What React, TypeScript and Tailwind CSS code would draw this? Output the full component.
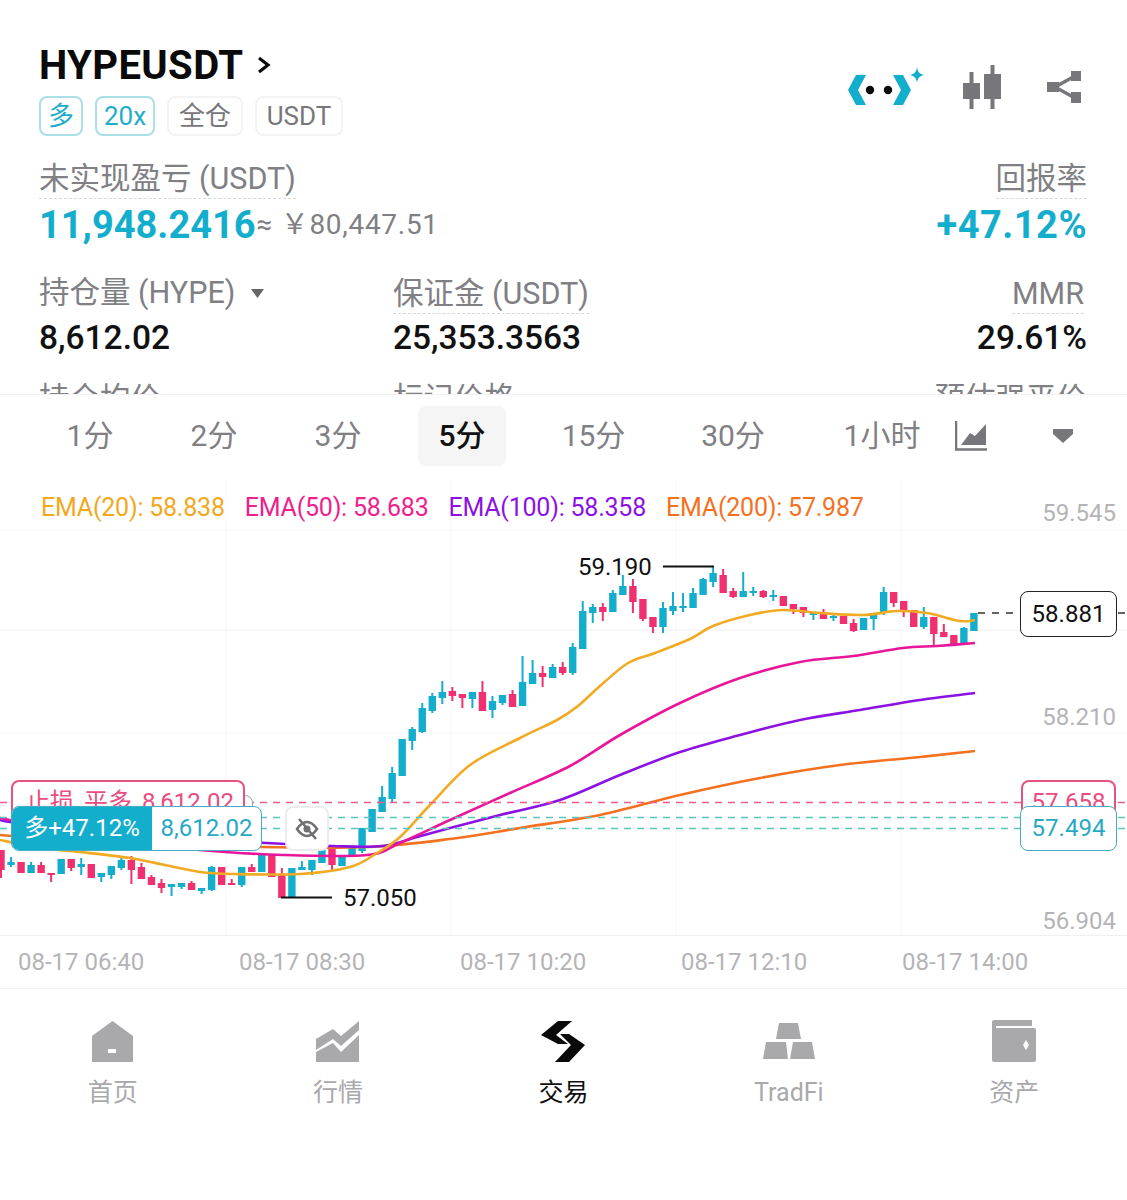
import React from 'react';

const FONT = "font-['Roboto','Noto_Sans_CJK_SC',sans-serif]";
const TEAL = '#14aecd';
const PINK = '#f0306f';

// [colour, body top, body bottom, wick top, wick bottom], one per 5 min bar
type Bar = [string, number, number, number, number];
const bars: Bar[] = [
  ['p', 850, 870, 850, 878], ['t', 862, 865, 857, 867], ['p', 862, 873, 862, 873], ['t', 865, 873, 862, 873],
  ['p', 865, 873, 862, 873], ['p', 873, 875, 873, 882], ['t', 859, 874, 859, 874], ['p', 859, 868, 859, 871],
  ['t', 864, 867, 858, 875], ['p', 864, 878, 864, 878], ['t', 873, 877, 873, 882], ['t', 866, 875, 866, 879],
  ['t', 860, 868, 858, 870], ['p', 860, 870, 856, 884], ['p', 867, 879, 863, 879], ['p', 877, 885, 875, 885],
  ['p', 883, 888, 879, 893], ['t', 884, 887, 884, 896], ['t', 883, 887, 883, 889], ['p', 883, 890, 881, 890],
  ['t', 888, 891, 888, 894], ['t', 867, 890, 866, 891], ['p', 867, 885, 867, 885], ['p', 883, 885, 879, 885],
  ['t', 867, 885, 867, 887], ['p', 867, 872, 864, 872], ['t', 855, 872, 855, 872], ['p', 855, 877, 855, 877],
  ['p', 875, 898, 868, 898], ['t', 868, 897, 868, 897], ['t', 867, 870, 861, 870], ['t', 860, 870, 860, 875],
  ['t', 850, 863, 850, 863], ['p', 848, 865, 848, 870], ['t', 857, 866, 857, 866], ['t', 847, 857, 847, 857],
  ['t', 828, 851, 828, 853], ['t', 809, 832, 809, 832], ['t', 797, 812, 786, 812], ['t', 773, 799, 767, 802],
  ['t', 739, 776, 739, 776], ['t', 729, 741, 727, 750], ['t', 708, 732, 703, 733], ['t', 696, 711, 693, 713],
  ['t', 692, 698, 681, 704], ['p', 691, 696, 687, 701], ['p', 694, 698, 694, 708], ['t', 692, 699, 692, 708],
  ['p', 692, 711, 681, 711], ['t', 701, 710, 696, 718], ['t', 695, 703, 695, 705], ['p', 694, 707, 690, 707],
  ['t', 682, 706, 656, 706], ['t', 673, 684, 660, 684], ['p', 673, 677, 666, 687], ['t', 667, 678, 664, 678],
  ['p', 667, 673, 662, 675], ['t', 647, 673, 643, 675], ['t', 611, 649, 601, 649], ['t', 607, 613, 604, 623],
  ['p', 607, 612, 603, 621], ['t', 593, 612, 590, 612], ['t', 586, 595, 575, 595], ['p', 586, 602, 579, 613],
  ['p', 599, 619, 599, 621], ['p', 617, 627, 617, 633], ['t', 608, 627, 602, 633], ['t', 606, 611, 592, 615],
  ['t', 606, 608, 593, 612], ['t', 593, 608, 588, 608], ['t', 579, 595, 578, 595], ['t', 573, 582, 567, 587],
  ['p', 575, 593, 569, 593], ['p', 591, 597, 588, 598], ['t', 591, 597, 572, 597], ['t', 591, 593, 587, 596],
  ['p', 591, 597, 590, 598], ['t', 595, 597, 590, 601], ['p', 596, 606, 596, 606], ['p', 604, 609, 604, 614],
  ['p', 607, 613, 607, 617], ['t', 613, 614, 613, 620], ['p', 612, 619, 609, 619], ['t', 616, 618, 613, 621],
  ['p', 616, 624, 616, 624], ['p', 623, 631, 619, 632], ['t', 618, 630, 618, 630], ['t', 613, 619, 613, 630],
  ['t', 592, 613, 587, 615], ['p', 592, 603, 592, 607], ['p', 601, 612, 601, 617], ['p', 610, 627, 610, 627],
  ['t', 617, 627, 607, 629], ['p', 617, 634, 617, 645], ['p', 632, 637, 624, 637], ['p', 635, 645, 635, 645],
  ['t', 628, 644, 627, 644], ['t', 613, 631, 613, 631],
];

const ema20 = [[0,840],[40,848],[80,852],[130,858],[165,865],[200,872],[233,874],[300,874],[350,867],[377,853],[400,837],[430,805],[470,765],[520,738],[557,720],[578,706],[600,686],[628,663],[655,653],[690,639],[713,626],[750,615],[783,610],[820,613],[863,615],[897,611],[927,613],[960,621],[975,620]];
const ema50 = [[0,818],[60,830],[130,842],[200,850],[283,855],[367,855],[400,843],[450,820],[510,793],[570,766],[620,735],[680,703],[740,678],[800,662],[853,656],[903,648],[937,646],[975,643]];
const ema100 = [[0,818],[10,822],[100,832],[267,843],[333,846],[383,846],[417,837],[450,828],[500,815],[560,800],[620,775],[680,752],[740,735],[800,720],[860,710],[920,700],[975,693]];
const ema200 = [[0,835],[100,842],[260,847],[367,847],[450,839],[520,828],[600,815],[680,795],[760,778],[840,765],[920,757],[975,751]];

// catmull-rom through the sampled points so the averages look smooth
const smooth = (p: number[][]) => {
  let d = `M${p[0][0]} ${p[0][1]}`;
  for (let i = 0; i < p.length - 1; i++) {
    const a = p[Math.max(i - 1, 0)], b = p[i], c = p[i + 1], e = p[Math.min(i + 2, p.length - 1)];
    d += ` C${b[0] + (c[0] - a[0]) / 6} ${b[1] + (c[1] - a[1]) / 6} ${c[0] - (e[0] - b[0]) / 6} ${c[1] - (e[1] - b[1]) / 6} ${c[0]} ${c[1]}`;
  }
  return d;
};

const Logo = () => (
  <svg width="78" height="42" viewBox="0 0 78 42">
    <path d="M8 9H18L10 24L18 39H8L0 24Z" fill={TEAL} />
    <path d="M45 9H55L63 24L55 39H45L53 24Z" fill={TEAL} />
    <circle cx="22" cy="24" r="4.2" fill="#0a0a0a" />
    <circle cx="40" cy="24" r="4.2" fill="#0a0a0a" />
    <path d="M69 1.5C70 6 71 7.5 76 9C71 10.5 70 12 69 16.5C68 12 67 10.5 62 9C67 7.5 68 6 69 1.5Z" fill={TEAL} />
  </svg>
);

const CandleIcon = () => (
  <svg width="42" height="44" viewBox="0 0 42 44" fill="#77777b">
    <rect x="2" y="18" width="17" height="16" />
    <rect x="8.5" y="7" width="4" height="37" />
    <rect x="23" y="9" width="17" height="25" />
    <rect x="29.5" y="0" width="4" height="44" />
  </svg>
);

const ShareIcon = () => (
  <svg width="34" height="32" viewBox="0 0 34 32" fill="#77777b">
    <rect x="0" y="11" width="12" height="10" />
    <rect x="24" y="0" width="10" height="10" />
    <rect x="24" y="21" width="10" height="11" />
    <path d="M8 16L28 5M8 16L28 27" stroke="#77777b" strokeWidth="3.5" fill="none" />
  </svg>
);

const AreaIcon = () => (
  <svg width="32" height="30" viewBox="0 0 32 30" fill="#77777b">
    <path d="M1 0V28.5H32" stroke="#77777b" strokeWidth="2.5" fill="none" />
    <path d="M6 24L15 12L20 15L31 3V24Z" />
  </svg>
);

const HomeIcon = () => (
  <svg width="41" height="41" viewBox="0 0 41 41">
    <path d="M20.5 0L41 15V41H0V15Z" fill="#a9a9ac" />
    <rect x="16" y="28" width="8" height="4" fill="#fff" />
  </svg>
);

const MarketIcon = () => (
  <svg width="44" height="41" viewBox="0 0 44 41" fill="#a9a9ac">
    <path d="M0 18L17 8L25 15L43 0V9L25 25L17 18L0 29Z" />
    <path d="M0 41V31L17 22L25 31L43 14V41Z" />
  </svg>
);

const TradeIcon = () => (
  <svg width="44" height="41" viewBox="0 0 44 41" fill="#0a0a0a">
    <path d="M17 0H31L15 14L27 23H17L0 14Z" />
    <path d="M19 13H28L44 24L28 41H14L30 24Z" />
  </svg>
);

const GoldIcon = () => (
  <svg width="52" height="36" viewBox="0 0 52 36" fill="#a9a9ac">
    <path d="M16 0H35L38 16H13Z" />
    <path d="M3 19H23L25 36H0Z" />
    <path d="M30 19H49L52 36H27Z" />
  </svg>
);

const WalletIcon = () => (
  <svg width="44" height="42" viewBox="0 0 44 42">
    <path d="M0 2Q0 0 2 0H40V6H4V8H42Q44 8 44 10V40Q44 42 42 42H2Q0 42 0 40Z" fill="#a9a9ac" />
    <path d="M34 20L37 25L34 30L31 25Z" fill="#fff" />
  </svg>
);

const Dashed = ({ children, className = '' }: { children: React.ReactNode; className?: string }) => (
  <span className={`inline-block border-b border-dashed border-[#d8d8da] leading-[36px] h-[38px] whitespace-nowrap ${className}`}>{children}</span>
);

const tabs = [
  { label: '1分', cls: 'w-[124px]' },
  { label: '2分', cls: 'w-[124px]' },
  { label: '3分', cls: 'w-[124px]' },
  { label: '5分', cls: 'w-[88px] h-[60px] ml-[18px] mr-[21px] bg-[#f5f5f5] rounded-lg text-[#111] font-medium' },
  { label: '15分', cls: 'w-[133px]' },
  { label: '30分', cls: 'w-[146px]' },
  { label: '1小时', cls: 'w-[152px]' },
];

const navItems = [
  { label: '首页', icon: <HomeIcon />, active: false },
  { label: '行情', icon: <MarketIcon />, active: false },
  { label: '交易', icon: <TradeIcon />, active: true },
  { label: 'TradFi', icon: <GoldIcon />, active: false },
  { label: '资产', icon: <WalletIcon />, active: false },
];

const Chart = () => (
  <div className="relative h-[456px] border-b border-[#f0f0f0] overflow-hidden">
    <svg className="absolute inset-0" width="1127" height="456" viewBox="0 480 1127 456">
      {[530, 630, 733].map(y => (
        <line key={y} x1="0" x2="1127" y1={y} y2={y} stroke={y === 630 ? '#f0f0f0' : '#f8f8f8'} />
      ))}
      {[226, 451, 676, 901].map(x => (
        <line key={x} x1={x} x2={x} y1="480" y2="936" stroke="#f8f8f8" />
      ))}
      {bars.map(([c, top, bottom, hi, lo], k) => {
        const x = 1 + k * 10.03;
        const fill = c === 't' ? TEAL : PINK;
        return (
          <g key={k} fill={fill}>
            <rect x={x - 1} y={hi} width="2" height={lo - hi} />
            <rect x={x - 3.7} y={top} width="7.4" height={Math.max(bottom - top, 2)} />
          </g>
        );
      })}
      <path d={smooth(ema200)} fill="none" stroke="#f4711f" strokeWidth="2.6" />
      <path d={smooth(ema100)} fill="none" stroke="#8c12e4" strokeWidth="2.6" />
      <path d={smooth(ema50)} fill="none" stroke="#e8169a" strokeWidth="2.6" />
      <path d={smooth(ema20)} fill="none" stroke="#f2aa22" strokeWidth="2.6" />
      <line x1="0" x2="1127" y1="802.5" y2="802.5" stroke="#ea5c8c" strokeWidth="1.5" strokeDasharray="7 6" />
      <line x1="0" x2="1127" y1="817.5" y2="817.5" stroke="#5cc4bd" strokeWidth="1.5" strokeDasharray="7 6" />
      <line x1="0" x2="1127" y1="828.5" y2="828.5" stroke="#5cc4bd" strokeWidth="1.5" strokeDasharray="7 6" />
      <line x1="978" x2="1127" y1="613" y2="613" stroke="#333" strokeWidth="1.5" strokeDasharray="7 7" />
      <line x1="663" x2="714" y1="566.5" y2="566.5" stroke="#111" strokeWidth="2" />
      <line x1="281" x2="332" y1="897.5" y2="897.5" stroke="#111" strokeWidth="2" />
    </svg>

    {/* EMA legend */}
    <div className="absolute left-[41px] top-[13px] flex gap-[20px] text-[25px] leading-[30px] tracking-[-0.22px] whitespace-nowrap">
      <span className="text-[#f2a81d]">EMA(20): 58.838</span>
      <span className="text-[#ee1f8e]">EMA(50): 58.683</span>
      <span className="text-[#8c12e4]">EMA(100): 58.358</span>
      <span className="text-[#f4711f]">EMA(200): 57.987</span>
    </div>

    {/* price axis */}
    <span className="absolute right-[11px] top-[18px] text-[24px] leading-[30px] text-[#b4b4b7]">59.545</span>
    <span className="absolute right-[11px] top-[222px] text-[24px] leading-[30px] text-[#b4b4b7]">58.210</span>
    <span className="absolute right-[11px] top-[426px] text-[24px] leading-[30px] text-[#b4b4b7]">56.904</span>

    {/* high / low marks */}
    <span className="absolute left-[578px] top-[72px] text-[24px] leading-[30px] text-[#111]">59.190</span>
    <span className="absolute left-[343px] top-[403px] text-[24px] leading-[30px] text-[#111]">57.050</span>

    {/* last price */}
    <div className="absolute left-[1020px] top-[111px] w-[97px] h-[46px] flex items-center justify-center pb-[1px] bg-white border-[1.5px] border-[#222] rounded-lg text-[24px] text-[#111]">58.881</div>

    {/* stop loss tag + position tag */}
    <div className="absolute left-[213px] top-[315px] w-[40px] h-[40px] rounded-lg border border-[#9aa5a8] bg-white" />
    <div className="absolute left-[11px] top-[300px] w-[234px] h-[46px] bg-white border-2 border-[#e8527f] rounded-lg flex pl-[13px] pt-[5px] gap-[10px] text-[24px] leading-[30px] text-[#ea4c7f] whitespace-nowrap">
      <span>止损</span><span>平多</span><span>8,612.02</span>
    </div>
    <div className="absolute left-[11px] top-[326px] w-[251px] h-[45px] flex rounded-lg overflow-hidden border-[1.5px] border-[#46aec4] bg-white text-[24px] whitespace-nowrap">
      <div className="w-[140px] flex items-center justify-center pb-[1px] text-white" style={{ backgroundColor: TEAL }}>多+47.12%</div>
      <div className="flex-1 flex items-center justify-center pb-[1px] text-[#27a9c6]">8,612.02</div>
    </div>
    <div className="absolute left-[285px] top-[326px] w-[44px] h-[45px] flex items-center justify-center bg-white border-2 border-[#ececec] rounded-lg">
      <svg width="24" height="22" viewBox="0 0 24 22" fill="none" stroke="#6f6f73" strokeWidth="2.5">
        <path d="M2 11C6 5 9 4 12 4C15 4 18 5 22 11C18 17 15 18 12 18C9 18 6 17 2 11Z" />
        <circle cx="12" cy="11" r="3.5" fill="#6f6f73" stroke="none" />
        <path d="M4 1L21 21" />
      </svg>
    </div>

    <div className="absolute left-[1021px] top-[300px] w-[95px] h-[46px] bg-white border-2 border-[#e8527f] rounded-lg flex justify-center pt-[5px] text-[24px] leading-[30px] text-[#ea4c7f]">57.658</div>
    <div className="absolute left-[1020px] top-[326px] w-[97px] h-[45px] flex items-center justify-center pb-[1px] bg-white border-[1.5px] border-[#46aec4] rounded-lg text-[24px] text-[#27a9c6]">57.494</div>
  </div>
);

export default function App() {
  return (
    <div className={`w-[1127px] h-[1200px] bg-white flex flex-col overflow-hidden ${FONT}`}>
      {/* Position summary */}
      <div className="h-[395px] shrink-0 overflow-hidden border-b border-[#f2f2f2] pt-[42px] pl-[39px] pr-[40px]">
        <div className="flex items-center justify-between pr-[6px]">
          <div>
            <div className="flex items-center gap-[14px] h-[48px]">
              <span className="text-[40px] leading-[48px] font-bold tracking-[0.4px] text-[#0a0a0a]">HYPEUSDT</span>
              <svg width="14" height="18" viewBox="0 0 14 18" fill="none" stroke="#0a0a0a" strokeWidth="3.2" className="-mt-[3px]">
                <path d="M2 2L11 9L2 16" />
              </svg>
            </div>
            <div className="flex gap-[12px] mt-[6px] text-[26px] leading-[36px]">
              <span className="h-[40px] w-[44px] flex items-center justify-center rounded-lg border-2 border-[#abdfe8] text-[#1fadc9]">多</span>
              <span className="h-[40px] w-[60px] flex items-center justify-center rounded-lg border-2 border-[#abdfe8] text-[#1fadc9]">20x</span>
              <span className="h-[40px] w-[76px] flex items-center justify-center rounded-lg border-2 border-[#f3f3f4] text-[#77777b]">全仓</span>
              <span className="h-[40px] w-[88px] flex items-center justify-center rounded-lg border-2 border-[#f3f3f4] text-[#77777b]">USDT</span>
            </div>
          </div>
          <div className="flex items-center -mt-[4px]">
            <Logo />
            <span className="w-[35px]" />
            <CandleIcon />
            <span className="w-[44px]" />
            <ShareIcon />
          </div>
        </div>

        <div className="flex justify-between mt-[25px] text-[30.5px] text-[#808084]">
          <Dashed>未实现盈亏 (USDT)</Dashed>
          <Dashed>回报率</Dashed>
        </div>
        <div className="flex justify-between items-center h-[52px]">
          <div className="flex items-center">
            <span className="text-[38px] font-bold" style={{ color: TEAL }}>11,948.2416</span>
            <span className="text-[28px] text-[#808084] tracking-[0.7px] ml-[1px]">≈ ￥80,447.51</span>
          </div>
          <span className="text-[38px] font-bold tracking-[0.5px]" style={{ color: TEAL }}>+47.12%</span>
        </div>

        <div className="grid grid-cols-[354px_1fr_auto] mt-[20px] text-[#808084] text-[30.5px]">
          <div className="flex items-center gap-[16px]">
            <Dashed className="border-transparent">持仓量 (HYPE)</Dashed>
            <svg width="13" height="9" viewBox="0 0 13 9" fill="#666"><path d="M0 0H13L6.5 9Z" /></svg>
          </div>
          <div><Dashed>保证金 (USDT)</Dashed></div>
          <div className="text-right pr-[3px]"><Dashed>MMR</Dashed></div>
          <div className="text-[33.5px] leading-[42px] text-[#111] font-medium">8,612.02</div>
          <div className="text-[33.5px] leading-[42px] text-[#111] font-medium">25,353.3563</div>
          <div className="text-[33.5px] leading-[42px] text-[#111] font-medium text-right">29.61%</div>
          <div className="mt-[17px]">持仓均价</div>
          <div className="mt-[17px]">标记价格</div>
          <div className="mt-[17px] text-right">预估强平价</div>
        </div>
      </div>

      {/* Intervals */}
      <div className="h-[85px] shrink-0 flex items-center pl-[28px] pb-[4px] text-[30px] text-[#808084]">
        {tabs.map(t => (
          <span key={t.label} className={`flex items-center justify-center whitespace-nowrap ${t.cls}`}>{t.label}</span>
        ))}
        <span className="ml-[-3px]"><AreaIcon /></span>
        <svg width="20" height="14" viewBox="0 0 20 14" fill="#77777b" className="ml-[66px]"><path d="M0 0H20V5L10 14L0 5Z" /></svg>
      </div>

      <Chart />

      {/* Time axis */}
      <div className="h-[53px] shrink-0 border-b border-[#f0f0f0] flex items-center gap-[95px] pl-[18px] text-[24px] text-[#b4b4b7] whitespace-nowrap">
        {['08-17 06:40', '08-17 08:30', '08-17 10:20', '08-17 12:10', '08-17 14:00'].map(t => (
          <span key={t} className="w-[126px] text-center">{t}</span>
        ))}
      </div>

      {/* Bottom nav */}
      <div className="grid grid-cols-5 pt-[30px]">
        {navItems.map(n => (
          <div key={n.label} className="flex flex-col items-center">
            <div className="h-[44px] flex items-center">{n.icon}</div>
            <span className={`mt-[15px] text-[25px] leading-[30px] ${n.active ? 'text-[#111]' : 'text-[#a9a9ac]'}`}>{n.label}</span>
          </div>
        ))}
      </div>
    </div>
  );
}
